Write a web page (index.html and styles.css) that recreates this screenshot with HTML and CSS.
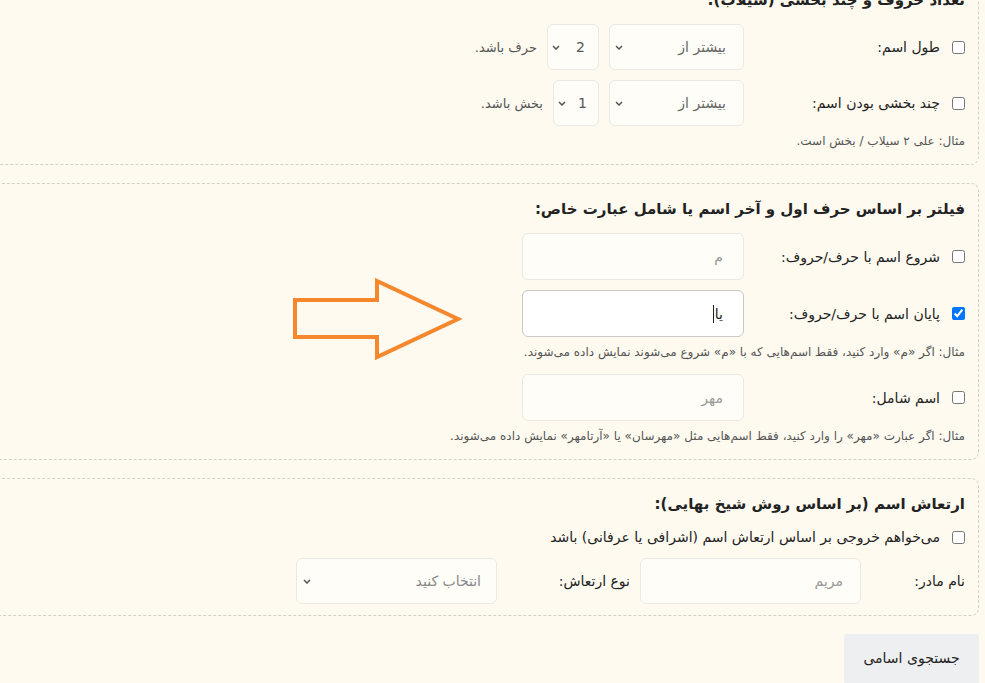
FILE: index.html
```html
<!DOCTYPE html>
<html lang="fa" dir="rtl">
<head>
    <meta charset="UTF-8">
    <meta name="viewport" content="width=device-width, initial-scale=1.0">
    <title>جستجوی اسامی</title>
    <link rel="stylesheet" href="styles.css">
</head>
<body>
    <div class="page">

        <!-- تعداد حروف -->
        <div class="section first">
            <h3 class="section-title">تعداد حروف و چند بخشی (سیلاب):</h3>

            <div class="row">
                <label class="check"><input type="checkbox"> طول اسم:</label>
                <div class="select wide">
                    <span>بیشتر از</span>
                    <svg class="chevron" width="8" height="5" viewBox="0 0 8 5"><path d="M1 1 L4 4 L7 1" fill="none" stroke="#555" stroke-width="1.5"/></svg>
                </div>
                <div class="select num">
                    <span>2</span>
                    <svg class="chevron" width="8" height="5" viewBox="0 0 8 5"><path d="M1 1 L4 4 L7 1" fill="none" stroke="#555" stroke-width="1.5"/></svg>
                </div>
                <span class="unit">حرف باشد.</span>
            </div>

            <div class="row">
                <label class="check"><input type="checkbox"> چند بخشی بودن اسم:</label>
                <div class="select wide">
                    <span>بیشتر از</span>
                    <svg class="chevron" width="8" height="5" viewBox="0 0 8 5"><path d="M1 1 L4 4 L7 1" fill="none" stroke="#555" stroke-width="1.5"/></svg>
                </div>
                <div class="select num narrow">
                    <span>1</span>
                    <svg class="chevron" width="8" height="5" viewBox="0 0 8 5"><path d="M1 1 L4 4 L7 1" fill="none" stroke="#555" stroke-width="1.5"/></svg>
                </div>
                <span class="unit">بخش باشد.</span>
            </div>

            <p class="hint">مثال: علی ۲ سیلاب / بخش است.</p>
        </div>

        <!-- حرف اول و آخر -->
        <div class="section">
            <h3 class="section-title">فیلتر بر اساس حرف اول و آخر اسم یا شامل عبارت خاص:</h3>

            <div class="row">
                <label class="check"><input type="checkbox"> شروع اسم با حرف/حروف:</label>
                <input type="text" class="field" placeholder="م">
            </div>

            <div class="row">
                <label class="check"><input type="checkbox" checked> پایان اسم با حرف/حروف:</label>
                <div class="field active">یا<span class="caret"></span></div>
            </div>
            <p class="hint">مثال: اگر «م» وارد کنید، فقط اسم‌هایی که با «م» شروع می‌شوند نمایش داده می‌شوند.</p>

            <div class="row">
                <label class="check"><input type="checkbox"> اسم شامل:</label>
                <input type="text" class="field" placeholder="مهر">
            </div>
            <p class="hint">مثال: اگر عبارت «مهر» را وارد کنید، فقط اسم‌هایی مثل «مهرسان» یا «آرتامهر» نمایش داده می‌شوند.</p>
        </div>

        <!-- ارتعاش اسم -->
        <div class="section last">
            <h3 class="section-title">ارتعاش اسم (بر اساس روش شیخ بهایی):</h3>

            <label class="check line"><input type="checkbox"> می‌خواهم خروجی بر اساس ارتعاش اسم (اشرافی یا عرفانی) باشد</label>

            <div class="row">
                <label class="plain mother">نام مادر:</label>
                <input type="text" class="field mother-input" placeholder="مریم">
                <label class="plain kind">نوع ارتعاش:</label>
                <div class="select type">
                    <span>انتخاب کنید</span>
                    <svg class="chevron" width="8" height="5" viewBox="0 0 8 5"><path d="M1 1 L4 4 L7 1" fill="none" stroke="#555" stroke-width="1.5"/></svg>
                </div>
            </div>
        </div>

        <button class="search-btn">جستجوی اسامی</button>
    </div>

    <!-- فلش نارنجی روی فرم -->
    <svg class="arrow" width="172" height="84" viewBox="0 0 172 84">
        <path d="M4 22 H86 V3 L167 41 L86 79 V59 H4 Z" fill="none" stroke="#f5872c" stroke-width="4" stroke-linejoin="miter"/>
    </svg>
</body>
</html>
```

FILE: styles.css
```css
html, body {
    margin: 0;
    padding: 0;
    overflow: hidden;
}

body {
    font-family: "DejaVu Sans", "Noto Sans", sans-serif;
    background-color: #fefaf0;
    color: #222;
    direction: rtl;
}

/* صفحه کمی اسکرول شده و از سمت چپ بیرون می‌زند */
.page {
    width: 1400px;
    margin-top: -26px;
    margin-right: 6px;
}

.section {
    border: 1px dashed #d3d0c8;
    border-radius: 8px;
    padding: 13px 13px 14px;
    margin-bottom: 18px;
}

.section.last {
    padding-bottom: 11px;
}

.section-title {
    margin: 0 0 12px;
    font-size: 15px;
    font-weight: bold;
    line-height: 24px;
    color: #222;
}

.row {
    display: flex;
    align-items: center;
    gap: 10px;
    margin-bottom: 10px;
}

.check {
    display: flex;
    align-items: center;
    width: 211px;
    font-size: 14px;
    color: #222;
}

.check input[type="checkbox"] {
    width: 13px;
    height: 13px;
    margin: 0 0 0 12px;
}

.check.line {
    width: auto;
    height: 18px;
    margin-bottom: 12px;
}

/* سلکت ساده: متن راست، فلش چپ */
.select {
    display: flex;
    align-items: center;
    justify-content: space-between;
    width: 135px;
    height: 46px;
    box-sizing: border-box;
    padding: 0 17px 0 5px;
    border: 1px solid #ece9e1;
    border-radius: 6px;
    background-color: #fffdf8;
    font-size: 14px;
    color: #666;
    cursor: pointer;
}

.chevron {
    flex-shrink: 0;
}

.select.num {
    width: 52px;
    padding: 0 13px 0 4px;
    color: #555;
}

.select.num.narrow {
    width: 46px;
    padding-right: 11px;
}

.select.type {
    width: 201px;
    padding: 0 15px 0 6px;
    color: #888;
}

.unit {
    font-size: 13px;
    color: #555;
}

.field {
    width: 222px;
    height: 47px;
    box-sizing: border-box;
    padding: 0 20px;
    border: 1px solid #ece9e1;
    border-radius: 6px;
    background-color: #fffdf8;
    font-family: inherit;
    font-size: 14px;
    color: #333;
    outline: none;
}

.field::placeholder {
    color: #999;
}

.field.active {
    display: flex;
    align-items: center;
    border-color: #c8c8c8;
    background-color: #ffffff;
    color: #222;
}

/* چشمک‌زن متن */
.caret {
    width: 1px;
    height: 18px;
    margin-right: 1px;
    background-color: #222;
}

.hint {
    margin: -4px 0 13px;
    font-size: 12px;
    line-height: 18px;
    color: #555;
}

.section .hint:last-child {
    margin-bottom: 0;
}

.plain {
    font-size: 14px;
    color: #222;
}

.plain.mother {
    width: 94px;
}

.plain.kind {
    width: 123px;
}

.field.mother-input {
    width: 221px;
    height: 46px;
    padding: 0 17px;
}

.row:last-child {
    margin-bottom: 0;
}

.search-btn {
    display: block;
    width: 135px;
    height: 50px;
    padding-bottom: 4px;
    border: none;
    border-radius: 2px;
    background-color: #eeeff1;
    font-family: inherit;
    font-size: 14px;
    color: #222;
    cursor: pointer;
}

/* فلش نارنجی که روی فرم کشیده شده */
.arrow {
    position: absolute;
    top: 278px;
    right: 522px;
}
```
